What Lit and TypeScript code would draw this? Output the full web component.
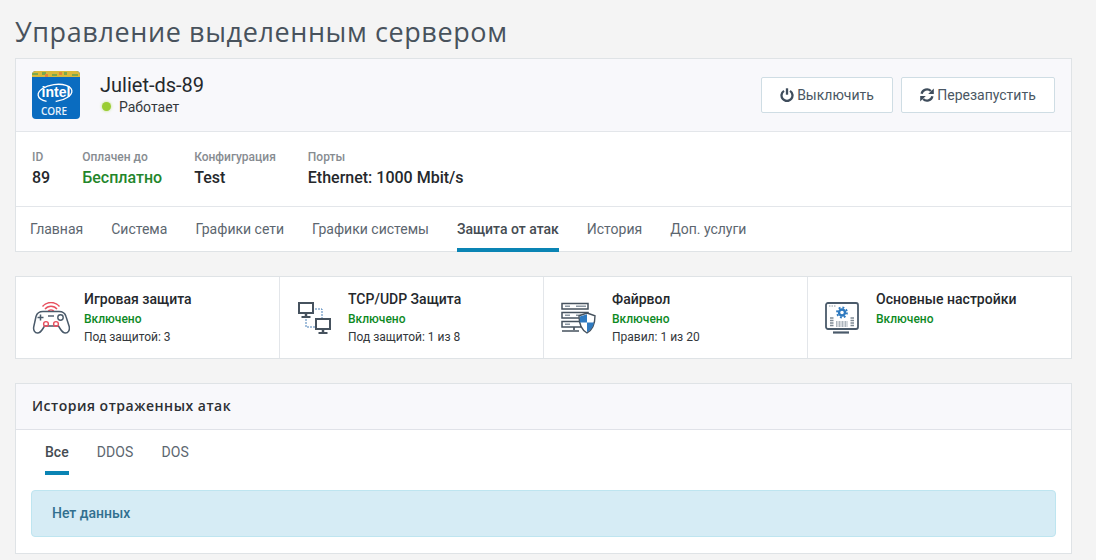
import { LitElement, html, css, svg } from "lit";
import { customElement } from "lit/decorators.js";

const powerIcon = svg`<svg viewBox="0 0 14 14" width="14" height="14"><path d="M4 2.900a5.500 5.500 0 1 0 6 0" fill="none" stroke="#3f4d5c" stroke-width="2.300"/><path d="M7 .3v6.400" stroke="#3f4d5c" stroke-width="2.300" fill="none"/></svg>`;
const refreshIcon = svg`<svg viewBox="0 0 14 14" width="14" height="14"><path d="M1.600 5.700A5.500 5.500 0 0 1 10.900 3" fill="none" stroke="#3f4d5c" stroke-width="2.300"/><path d="M13.800.4v5.600H8.200z" fill="#3f4d5c"/><path d="M12.400 8.300A5.500 5.500 0 0 1 3.100 11" fill="none" stroke="#3f4d5c" stroke-width="2.300"/><path d="M.2 13.600V8h5.600z" fill="#3f4d5c"/></svg>`;

const gameIcon = svg`<svg viewBox="1 0 38 32" width="38" height="32" fill="none">
  <path d="M10.500 4.500A11 11 0 0 1 27.500 4.500" transform="translate(1 0)" stroke="#e8505f" stroke-width="1.400"/>
  <path d="M13 7.200A7.500 7.500 0 0 1 25 7.200" transform="translate(1 0)" stroke="#e8505f" stroke-width="1.400"/>
  <path d="M15.800 9.800a3.600 3.600 0 0 1 6.400 0" transform="translate(1 0)" stroke="#e8505f" stroke-width="1.400"/>
  <path d="M11 9.500c-4 0-6 1.500-7 5L1.800 24.500c-.8 3.500 1 6.500 3.700 6.500 2.500 0 4-2 5.500-4.500l1.500-2.500h14l1.500 2.500c1.500 2.500 3 4.500 5.500 4.500 2.700 0 4.500-3 3.700-6.500L34 14.500c-1-3.500-3-5-7-5z" transform="translate(1 0)" stroke="#4a5a6a" stroke-width="1.500"/>
  <path d="M9.500 12.500v6M6.500 15.500h6" stroke="#4a5a6a" stroke-width="1.500"/>
  <circle cx="29.500" cy="15.500" r="2.700" stroke="#4a5a6a" stroke-width="1.400"/>
  <path d="M17 14h6" stroke="#4a5a6a" stroke-width="1.400"/>
  <circle cx="15" cy="22" r="2.400" stroke="#e8505f" stroke-width="1.400"/>
  <circle cx="25" cy="22" r="2.400" stroke="#e8505f" stroke-width="1.400"/>
</svg>`;

const netIcon = svg`<svg class="shift2" viewBox="0 0 34 33" width="34" height="33" fill="none">
  <rect x="1" y="1" width="14" height="10" stroke="#46525e" stroke-width="2"/>
  <path d="M8 12v3" stroke="#46525e" stroke-width="2.500"/>
  <path d="M3.500 15h9" stroke="#46525e" stroke-width="2"/>
  <rect x="18" y="17" width="14" height="10" stroke="#46525e" stroke-width="2"/>
  <path d="M25 28v3" stroke="#46525e" stroke-width="2.500"/>
  <path d="M20.500 31h9" stroke="#46525e" stroke-width="2"/>
  <path d="M17 7h7v9M8 17v8h9" stroke="#4a80b8" stroke-width="1" stroke-dasharray="2 1"/>
</svg>`;

const fireIcon = svg`<svg viewBox="0 0 36 34" width="36" height="34" fill="none">
  <rect x="2" y="1.500" width="26" height="5.500" stroke="#46525e" stroke-width="1.500"/>
  <rect x="2" y="10.500" width="26" height="5.500" stroke="#46525e" stroke-width="1.500"/>
  <rect x="2" y="19.500" width="19" height="5.500" stroke="#46525e" stroke-width="1.500"/>
  <path d="M16 4.200h10M5 4.200h5M5 13.200h5M16 13.200h6M5 22.200h5" stroke="#8c97a2" stroke-width="1.500"/>
  <path d="M14 25v3M2 29h17" stroke="#46525e" stroke-width="1.700"/>
  <path d="M27 11l8 2.800c0 8-1.800 13.700-8 17.200-6.200-3.500-8-9.200-8-17.200z" fill="#fff" stroke="#46525e" stroke-width="1.400"/>
  <path d="M27 12.300v8.200h-7c-.2-2-.2-3.800-.2-6z" fill="#2f7ac0"/>
  <path d="M27 20.500h7c-.7 4-2.800 7.300-7 9.700z" fill="#2f7ac0"/>
</svg>`;

const settingsIcon = svg`<svg class="shift1" viewBox="0 0 34 32" width="34" height="32" fill="none">
  <rect x="1" y="1" width="32" height="26" rx="2" stroke="#4a5a6a" stroke-width="1.800"/>
  <path d="M4 4h1.500M6.500 4H8M9 4h1.500" stroke="#8c97a2" stroke-width="1"/>
  <circle cx="17" cy="10.500" r="3" stroke="#2f7ac0" stroke-width="2.400"/>
  <circle cx="17" cy="10.500" r="5" stroke="#2f7ac0" stroke-width="1.800" stroke-dasharray="1.900 2"/>
  <path d="M5 16h3.500M5 18.500h3.500M5 21h3.500M5 23.500h3.500M25.500 16H29M25.500 18.500H29M25.500 21H29M25.500 23.500H29" stroke="#7f8a95" stroke-width="1.400"/>
  <path d="M11.500 19v6M13 19v6M14.500 19v6M16 19v6M17.500 19v6M19 19v6M20.500 19v6M22 19v6" stroke="#a4adb6" stroke-width=".9"/>
  <path d="M8 30.500h16" stroke="#4a5a6a" stroke-width="2.200"/>
</svg>`;

const intelLogo = svg`<svg viewBox="0 0 48 48" width="48" height="48">
  <defs><clipPath id="r"><rect width="48" height="48" rx="4"/></clipPath></defs>
  <g clip-path="url(#r)">
    <rect width="48" height="48" fill="#0a6cc0"/>
    <rect width="48" height="6" fill="#d9b93a"/>
    <path d="M0 2h6v2H0zM10 1h4v3h-4zM20 3h5v2h-5zM32 1h3v3h-3zM40 3h6v2h-6z" fill="#7ea84a"/>
    <path d="M13 3h3v3h-3zM27 1h3v3h-3z" fill="#e2863a"/>
    <ellipse cx="23" cy="22" rx="17" ry="8.500" fill="none" stroke="#fff" stroke-width="1.300" transform="rotate(-8 23 22)" stroke-dasharray="64 9" stroke-dashoffset="-30"/>
    <text x="24" y="26" text-anchor="middle" font-family="'Liberation Sans',sans-serif" font-size="14" font-weight="700" fill="#fff">intel</text>
    <text x="22" y="44" text-anchor="middle" font-family="'Open Sans',sans-serif" font-size="10" font-weight="600" fill="#e8f2fb">CORE</text>
  </g>
</svg>`;

interface Feature { title: string; sub?: string; icon: unknown; }

const features: Feature[] = [
  { title: "Игровая защита", sub: "Под защитой: 3", icon: gameIcon },
  { title: "TCP/UDP Защита", sub: "Под защитой: 1 из 8", icon: netIcon },
  { title: "Файрвол", sub: "Правил: 1 из 20", icon: fireIcon },
  { title: "Основные настройки", icon: settingsIcon },
];

const tabs = ["Главная", "Система", "Графики сети", "Графики системы", "Защита от атак", "История", "Доп. услуги"];

@customElement("app-root")
export class AppRoot extends LitElement {
  static styles = css`
    :host {
      display: block;
      height: 560px;
      background: #f4f4f4;
      font-family: Roboto, sans-serif;
      color: #212529;
      overflow: hidden;
    }
    .page {
      width: 1057px;
      margin-left: 15px;
    }
    h1 {
      margin: 0;
      height: 58px;
      box-sizing: border-box;
      padding-top: 14px;
      font-family: "Open Sans", sans-serif;
      font-weight: 400;
      font-size: 27px;
      line-height: 36px;
      letter-spacing: 0.6px;
      color: #48525c;
    }
    .card {
      background: #fff;
      border: 1px solid #dfe3e6;
    }
    .head {
      height: 72px;
      display: flex;
      align-items: center;
      padding: 0 16px;
      background: #f8f8fb;
      border-bottom: 1px solid #e3e6ea;
    }
    .logo { display: flex; margin-right: 20px; }
    .name { font-size: 20px; line-height: 24px; color: #25282c; }
    .status {
      display: flex;
      align-items: center;
      font-size: 14px;
      line-height: 18px;
      margin-top: 1px;
      margin-bottom: 2px;
      color: #33373b;
    }
    .dot {
      width: 9px;
      height: 9px;
      border-radius: 50%;
      background: #9acd32;
      margin: 0 8px 0 2px;
      box-shadow: 0 0 3px rgba(154, 205, 50, 0.6);
    }
    .actions { margin-left: auto; display: flex; gap: 8px; }
    .btn {
      height: 36px;
      box-sizing: border-box;
      display: flex;
      align-items: center;
      justify-content: center;
      gap: 3px;
      background: #fff;
      border: 1px solid #cfdde4;
      border-radius: 2px;
      font-size: 14px;
      color: #4a5763;
    }
    .btn.off { width: 132px; }
    .btn.re { width: 154px; }
    .info {
      height: 75px;
      box-sizing: border-box;
      display: flex;
      gap: 32px;
      padding: 18px 16px 0;
      border-bottom: 1px solid #e3e6ea;
    }
    .label { font-size: 12px; line-height: 14px; font-weight: 500; color: #878c91; }
    .value { font-size: 16px; line-height: 20px; font-weight: 500; color: #25282c; margin-top: 4px; }
    .value.green { color: #23862b; }
    .tabs {
      height: 44px;
      display: flex;
      gap: 28px;
      padding: 0 14px;
      font-size: 14px;
    }
    .tab {
      height: 45px;
      box-sizing: border-box;
      line-height: 44px;
      color: #5c666f;
    }
    .tab.on {
      color: #454c52;
      font-weight: 500;
      border-bottom: 4px solid #0a84b4;
    }
    .features {
      display: grid;
      grid-template-columns: repeat(3, 264px) 1fr;
      margin-top: 24px;
      height: 81px;
    }
    .feature {
      display: flex;
      border-right: 1px solid #e3e6ea;
      padding: 13px 0 0 16px;
      min-width: 0;
    }
    .feature:last-child { border-right: 0; }
    .f-icon {
      width: 52px;
      flex: none;
      padding-top: 12px;
      margin-top: -13px;
      padding-top: 25px;
      box-sizing: border-box;
    }
    .f-icon .shift2 { margin-left: 2px; }
    .f-icon .shift1 { margin-left: 1px; }
    .f-title { font-size: 14px; line-height: 18px; font-weight: 500; color: #25282c; }
    .f-on { font-size: 12px; line-height: 18px; font-weight: 500; color: #0d8a1f; margin-top: 2px; }
    .f-sub { font-size: 12px; line-height: 18px; color: #33373b; }
    .history { margin-top: 24px; }
    .h-head {
      height: 45px;
      background: #f8f8fb;
      border-bottom: 1px solid #e0e2e8;
      padding-left: 16px;
      font-family: "Open Sans", sans-serif;
      font-weight: 600;
      font-size: 14px;
      line-height: 44px;
      letter-spacing: 0.5px;
      color: #2c2f33;
    }
    .h-tabs {
      display: flex;
      gap: 28px;
      height: 45px;
      padding: 0 29px;
      font-size: 14px;
    }
    .h-tab { box-sizing: border-box; height: 45px; line-height: 44px; color: #5c666f; letter-spacing: 0.1px; }
    .h-tab.on { color: #454c52; font-weight: 500; border-bottom: 4px solid #0a84b4; letter-spacing: 0; }
    .alert {
      margin: 15px 15px 16px;
      height: 47px;
      box-sizing: border-box;
      padding-left: 20px;
      background: #d6ecf5;
      border: 1px solid #bee5f0;
      border-radius: 4px;
      font-size: 14px;
      font-weight: 500;
      line-height: 45px;
      color: #31708f;
    }
  `;

  render() {
    return html`
      <div class="page">
        <h1>Управление выделенным сервером</h1>
        <div class="card">
          <div class="head">
            <div class="logo">${intelLogo}</div>
            <div>
              <div class="name">Juliet-ds-89</div>
              <div class="status"><span class="dot"></span>Работает</div>
            </div>
            <div class="actions">
              <div class="btn off">${powerIcon}Выключить</div>
              <div class="btn re">${refreshIcon}Перезапустить</div>
            </div>
          </div>
          <div class="info">
            <div><div class="label">ID</div><div class="value">89</div></div>
            <div><div class="label">Оплачен до</div><div class="value green">Бесплатно</div></div>
            <div><div class="label">Конфигурация</div><div class="value">Test</div></div>
            <div><div class="label">Порты</div><div class="value">Ethernet: 1000 Mbit/s</div></div>
          </div>
          <div class="tabs">
            ${tabs.map((t) => html`<div class="tab ${t === "Защита от атак" ? "on" : ""}">${t}</div>`)}
          </div>
        </div>
        <div class="card features">
          ${features.map(
            (f) => html`<div class="feature">
              <div class="f-icon">${f.icon}</div>
              <div>
                <div class="f-title">${f.title}</div>
                <div class="f-on">Включено</div>
                ${f.sub ? html`<div class="f-sub">${f.sub}</div>` : ""}
              </div>
            </div>`
          )}
        </div>
        <div class="card history">
          <div class="h-head">История отраженных атак</div>
          <div class="h-tabs">
            <div class="h-tab on">Все</div>
            <div class="h-tab">DDOS</div>
            <div class="h-tab">DOS</div>
          </div>
          <div class="alert">Нет данных</div>
        </div>
      </div>
    `;
  }
}
